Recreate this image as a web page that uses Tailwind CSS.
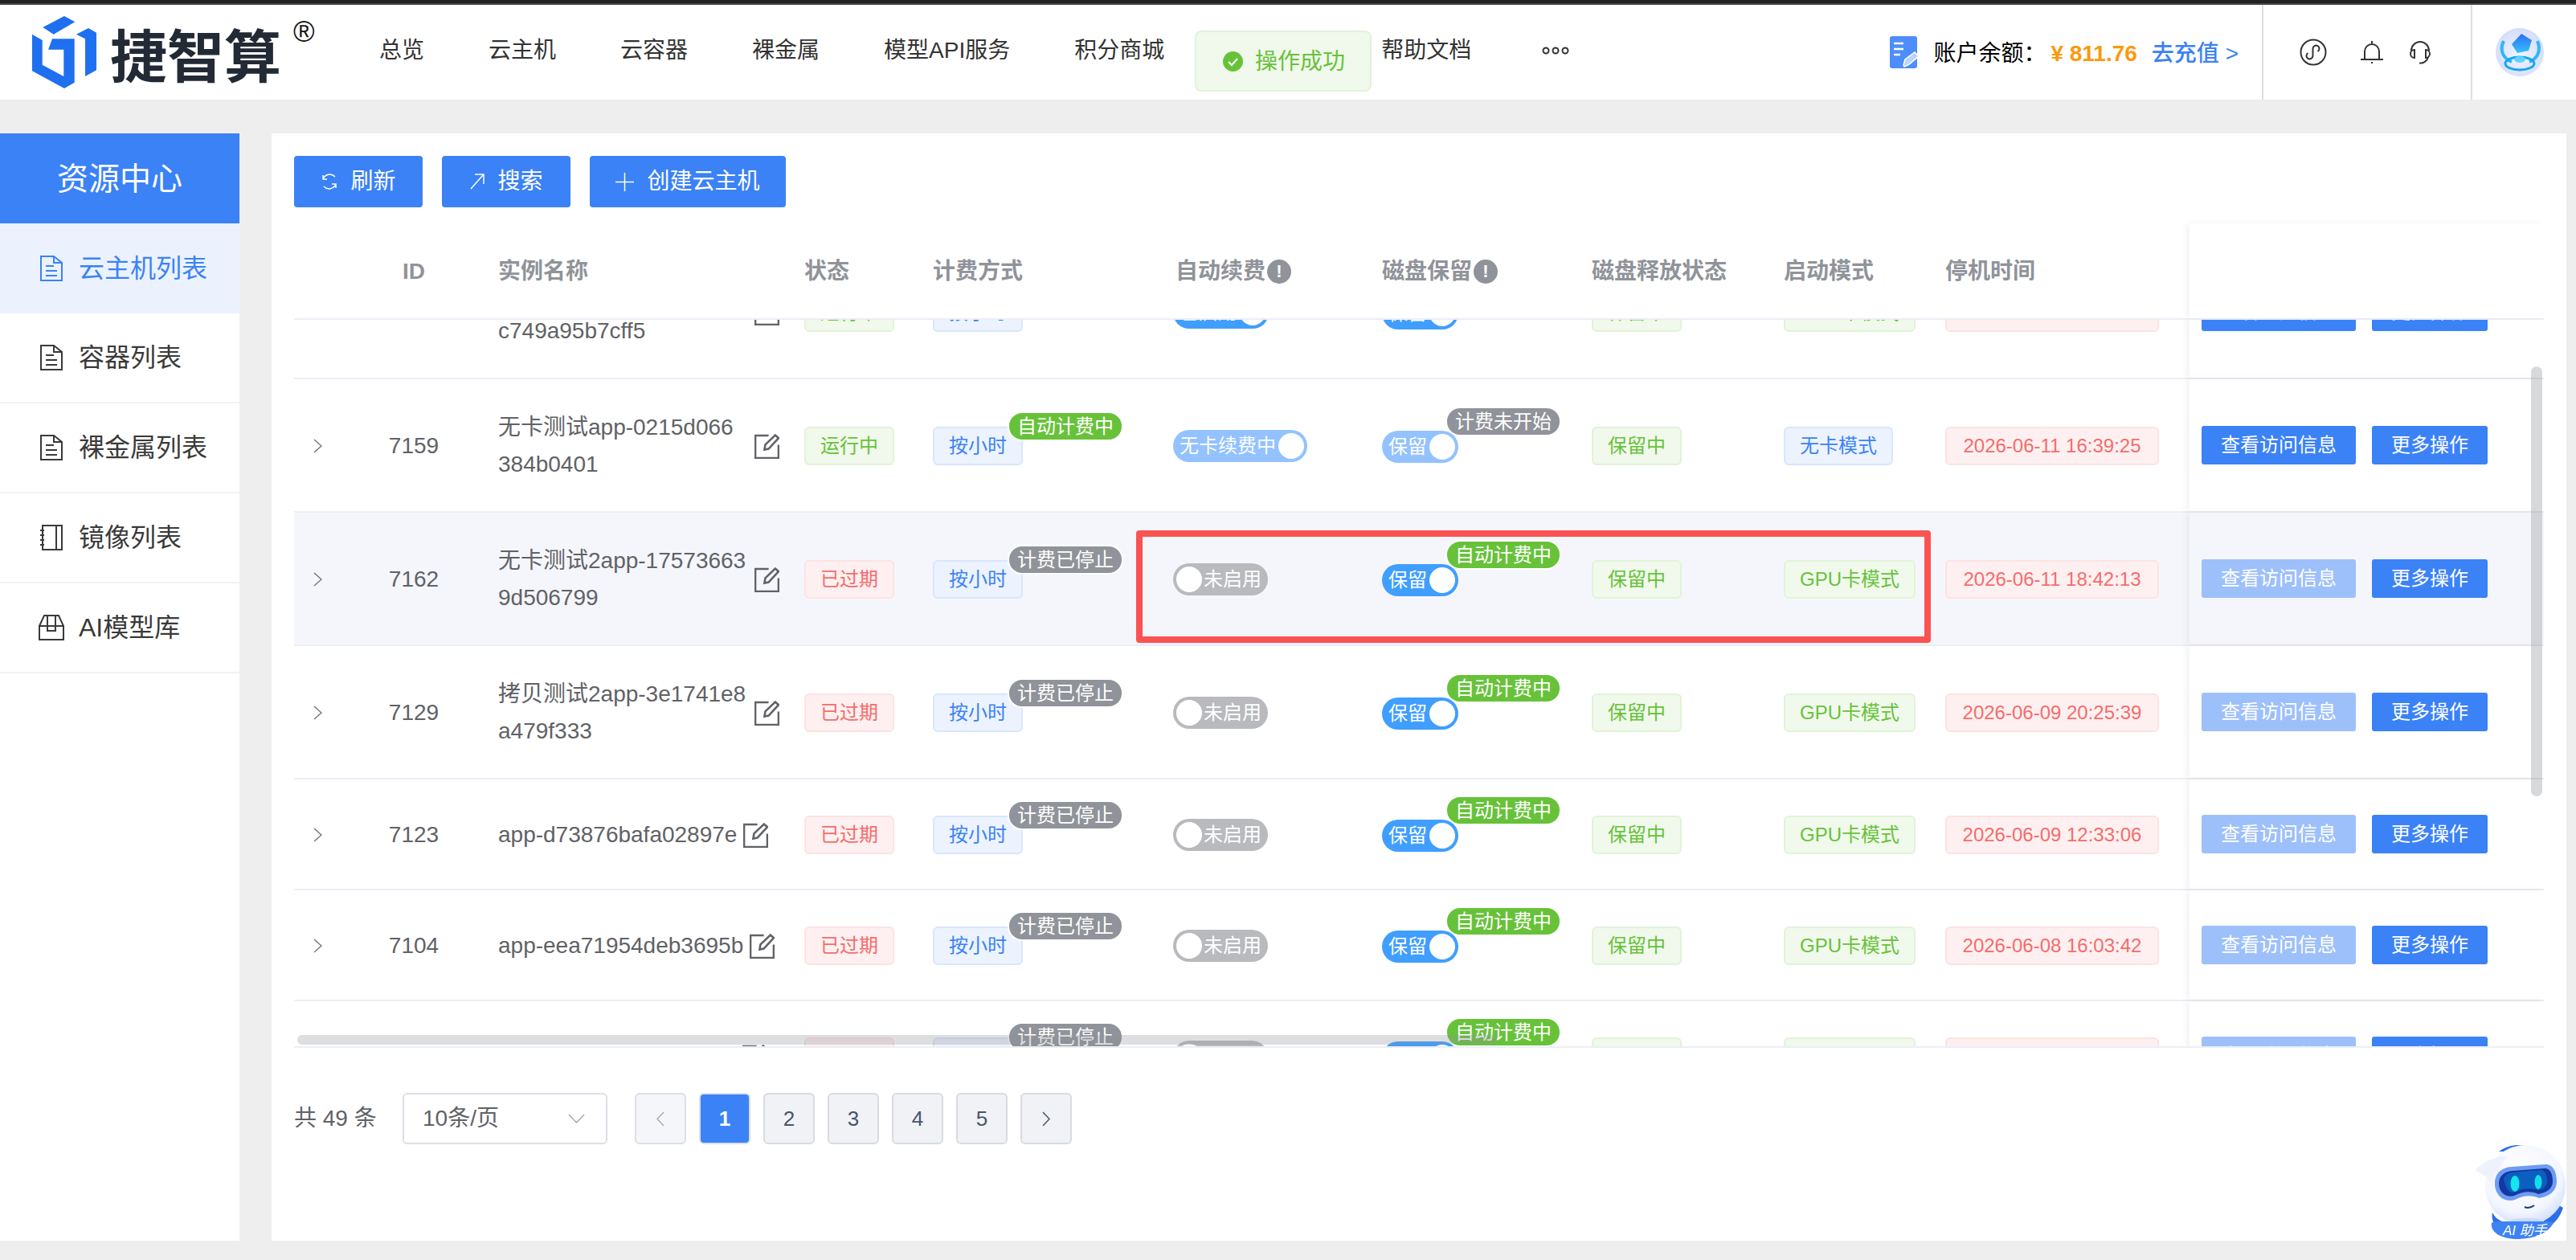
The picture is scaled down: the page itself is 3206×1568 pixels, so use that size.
<!DOCTYPE html>
<html lang="zh-CN">
<head>
<meta charset="utf-8">
<title>捷智算</title>
<script src="https://cdn.jsdelivr.net/npm/@tailwindcss/browser@4"></script>
</head>
<body class="h-screen w-full overflow-hidden bg-[#eeeeee] font-['Liberation_Sans','Noto_Sans_CJK_SC',sans-serif] text-[28px] leading-normal">

<div class="h-1.5 bg-[#222222] border-b-2 border-[#444444]"></div>

<!-- top nav -->
<header class="relative flex h-[118px] items-center bg-white pl-10">
    <div class="flex w-[432px] shrink-0 items-center">
        <svg class="h-[90px] w-20 shrink-0" viewBox="0 0 80 90" fill="#1f70f0" aria-hidden="true">
            <path d="M40 0 53.3 7.3 26.7 22.7 13.3 14Z"/>
            <path d="M55 22.7 70 15 80 20.7V67.3L66 75V28.3Z"/>
            <path d="M0 22.7 12.7 30V60.7L39.3 75V41.7H20L25 28.3H52.7V82.7L40 90 0 68.3Z"/>
        </svg>
        <span class="ml-[17px] whitespace-nowrap font-['Noto_Sans_CJK_SC',sans-serif] text-[71px] leading-none font-bold text-[#222a35]">捷智算</span>
        <span class="ml-[15px] -mt-[50px] text-[36px] leading-none text-[#111111]">®</span>
    </div>
    <nav class="flex items-center gap-20 pb-1 whitespace-nowrap text-[#333333]">
        <a>总览</a>
        <a>云主机</a>
        <a>云容器</a>
        <a>裸金属</a>
        <a>模型API服务</a>
        <a>积分商城</a>
        <div class="w-[110px]"></div>
        <a>帮助文档</a>
        <svg class="ml-2 h-2.5 w-[34px]" viewBox="0 0 34 10" fill="none" stroke="#333333" stroke-width="2" aria-hidden="true">
            <circle cx="5" cy="5" r="3.5"/><circle cx="17" cy="5" r="3.5"/><circle cx="29" cy="5" r="3.5"/>
        </svg>
    </nav>

    <!-- toast -->
    <div class="absolute left-[1487px] top-8 flex h-[76px] w-[220px] items-center gap-[15px] rounded-lg border-2 border-[#e1f3d8] bg-[#f0f9eb] pl-[33px] text-[#67c23a]">
        <svg class="h-[25px] w-[25px] shrink-0" viewBox="0 0 25 25" aria-hidden="true">
            <circle cx="12.5" cy="12.5" r="12.5" fill="#67c23a"/>
            <path d="M7 13l4 4 7-8" fill="none" stroke="#fff" stroke-width="2"/>
        </svg>
        <span class="mt-0.5 whitespace-nowrap">操作成功</span>
    </div>

    <div class="ml-auto flex h-full items-center">
        <svg class="h-10 w-[37px] shrink-0" viewBox="0 0 37 40" aria-hidden="true">
            <rect x="0" y="0" width="34" height="40" rx="3" fill="#4e8efc"/>
            <path d="M5 9h12M5 16h12M5 23h8" stroke="#fff" stroke-width="2.5"/>
            <path d="M17 36 19 29 31 20 36 25 24 35 18 38Z" fill="#bcd3fe" stroke="#fff" stroke-width="1.5"/>
        </svg>
        <span class="ml-[17px] mt-1 whitespace-nowrap text-black">账户余额：</span>
        <span class="ml-[6px] mt-1 whitespace-nowrap font-bold text-[#fa9a0e]">¥ 811.76</span>
        <span class="ml-[18px] mt-1 whitespace-nowrap font-medium text-[#3b82f6]">去充值 &gt;</span>
        <div class="ml-[29px] flex h-full w-[262px] items-center border-x-2 border-[#dddddd] pl-[45px]">
            <svg class="h-[34px] w-[34px]" viewBox="0 0 34 34" fill="none" stroke="#333333" stroke-width="2" aria-hidden="true">
                <circle cx="17" cy="17" r="15.5"/>
                <path d="M10.5 18a4 4 0 1 0 6 3.5v-9a4 4 0 1 1 6 3.5"/>
            </svg>
            <svg class="ml-[41px] h-[30px] w-[30px]" viewBox="0 0 30 30" fill="none" stroke="#333333" stroke-width="2" aria-hidden="true">
                <path d="M1 24H29M6 24V14a9 9 0 0 1 18 0V24"/>
                <path d="M15 1v3M14 28h2"/>
            </svg>
            <svg class="ml-[31px] h-[30px] w-7" viewBox="0 0 28 30" fill="none" stroke="#333333" stroke-width="2" aria-hidden="true">
                <path d="M3 13a11 11 0 0 1 22 0"/>
                <path d="M7 12A5 5 0 0 0 7 22ZM21 12A5 5 0 0 1 21 22Z"/>
                <path d="M24 21a10 10 0 0 1-11 7.5"/>
            </svg>
        </div>
        <svg class="ml-[29px] mr-10 h-[60px] w-[60px] shrink-0" viewBox="0 0 60 60" aria-hidden="true">
            <defs>
                <radialGradient id="avatarBg" cx="50%" cy="55%" r="55%">
                    <stop offset="0" stop-color="#f3f6ff"/><stop offset="1" stop-color="#d3dcfa"/>
                </radialGradient>
                <linearGradient id="cubeFill" x1="0" y1="0" x2="0" y2="1">
                    <stop offset="0" stop-color="#2f6df0"/><stop offset="1" stop-color="#35c2ff"/>
                </linearGradient>
            </defs>
            <circle cx="30" cy="30" r="30" fill="url(#avatarBg)"/>
            <path d="M32 7 45 15 41 28 27 31 20 20Z" fill="url(#cubeFill)"/>
            <path d="M10 16C4 28 10 38 20 42M52 16C57 28 52 38 42 42" fill="none" stroke="#2fb5f8" stroke-width="4"/>
            <ellipse cx="30" cy="44" rx="18" ry="8" fill="none" stroke="#19a4f2" stroke-width="3"/>
            <ellipse cx="30" cy="39" rx="7" ry="4" fill="#5cd5ff"/>
        </svg>
    </div>
</header>

<main class="flex h-[1444px] gap-10 pb-6 pr-3 pt-[42px]">
    <!-- sidebar -->
    <aside class="w-[298px] shrink-0 bg-white">
        <div class="flex h-28 items-center justify-center bg-[#3b82f6] pt-0.5 text-[39px] text-white">资源中心</div>
        <div class="flex h-28 items-center gap-5 bg-[#ebf2fe] pl-[50px] text-[32px] text-[#3b82f6]">
            <svg class="h-8 w-7 shrink-0" viewBox="0 0 28 32" fill="none" stroke="currentColor" stroke-width="2" aria-hidden="true"><path d="M1 1H17L27 9V31H1Z"/><path d="M17 1V9H27M7 13H17M7 19H21M7 25H21"/></svg>
            云主机列表
        </div>
        <div class="flex h-28 items-center gap-5 border-b-2 border-[#f2f2f2] pl-[50px] text-[32px] text-[#3a3a3a]">
            <svg class="h-8 w-7 shrink-0" viewBox="0 0 28 32" fill="none" stroke="currentColor" stroke-width="2" aria-hidden="true"><path d="M1 1H17L27 9V31H1Z"/><path d="M17 1V9H27M7 13H17M7 19H21M7 25H21"/></svg>
            容器列表
        </div>
        <div class="flex h-28 items-center gap-5 border-b-2 border-[#f2f2f2] pl-[50px] text-[32px] text-[#3a3a3a]">
            <svg class="h-8 w-7 shrink-0" viewBox="0 0 28 32" fill="none" stroke="currentColor" stroke-width="2" aria-hidden="true"><path d="M1 1H17L27 9V31H1Z"/><path d="M17 1V9H27M7 13H17M7 19H21M7 25H21"/></svg>
            裸金属列表
        </div>
        <div class="flex h-28 items-center gap-5 border-b-2 border-[#f2f2f2] pl-[50px] text-[32px] text-[#3a3a3a]">
            <svg class="h-8 w-7 shrink-0" viewBox="0 0 28 32" fill="none" stroke="currentColor" stroke-width="2" aria-hidden="true"><path d="M3 1H27V31H3ZM20 1V31M0 7H5M0 13H5M0 19H5M0 25H5"/></svg>
            镜像列表
        </div>
        <div class="flex h-28 items-center gap-[18px] border-b-2 border-[#f2f2f2] pl-[48px] text-[32px] text-[#3a3a3a]">
            <svg class="h-8 w-8 shrink-0" viewBox="0 0 32 32" fill="none" stroke="currentColor" stroke-width="2" aria-hidden="true"><path d="M1 14H31V31H1ZM1 14 7 1H25L31 14M11 1V20H21V1"/></svg>
            AI模型库
        </div>
    </aside>

    <!-- content panel -->
    <section class="relative min-w-0 flex-1 bg-white px-7 pt-7">
        <div class="flex gap-6 text-white">
            <button class="flex h-16 w-40 items-center justify-center gap-[15px] rounded bg-[#3b82f6]">
                <svg class="h-[22px] w-[22px]" viewBox="0 0 22 22" fill="none" stroke="#fff" stroke-width="1.5" aria-hidden="true"><path d="M18 5A9 9 0 0 0 3 8M4 17A9 9 0 0 0 19 14M3 3V8H8M19 19V14H14"/></svg>
                刷新
            </button>
            <button class="flex h-16 w-40 items-center justify-center gap-[15px] rounded bg-[#3b82f6]">
                <svg class="h-[22px] w-[20px]" viewBox="0 0 20 22" fill="none" stroke="#fff" stroke-width="1.5" aria-hidden="true"><path d="M2 20 17 3M7 2H18V14"/></svg>
                搜索
            </button>
            <button class="flex h-16 w-[244px] items-center justify-center gap-4 rounded bg-[#3b82f6]">
                <svg class="h-[23px] w-[23px]" viewBox="0 0 23 23" fill="none" stroke="#fff" stroke-width="1.5" aria-hidden="true"><path d="M11.5 0V23M0 11.5H23"/></svg>
                创建云主机
            </button>
        </div>

        <div class="relative mt-5">
            <!-- table head -->
            <div class="grid h-[120px] grid-cols-[90px_118px_427px_160px_299px_260px_261px_239px_201px_304px_441px] items-center border-b-2 border-[#ebeef5] pt-0.5 font-semibold text-[#909399]">
                <div></div>
                <div class="text-center">ID</div>
                <div class="pl-[46px]">实例名称</div>
                <div>状态</div>
                <div>计费方式</div>
                <div class="flex items-center pl-[3px]">自动续费<span class="ml-[2px] flex h-[30px] w-[30px] items-center justify-center rounded-full bg-[#909399] text-[22px] leading-none font-bold text-white">!</span></div>
                <div class="flex items-center">磁盘保留<span class="ml-[2px] flex h-[30px] w-[30px] items-center justify-center rounded-full bg-[#909399] text-[22px] leading-none font-bold text-white">!</span></div>
                <div>磁盘释放状态</div>
                <div>启动模式</div>
                <div>停机时间</div>
                <div class="-mt-0.5 self-stretch bg-white shadow-[-4px_0_8px_rgba(0,0,0,0.05)]"></div>
            </div>
            <!-- table body, scrolled -->
            <div class="h-[906px] overflow-hidden border-b-2 border-[#ebeef5]">
                <div id="rows" class="-mt-[92px]"></div>
            </div>
            <!-- scrollbars -->
            <div class="absolute left-[2784px] top-[178px] z-30 h-[535px] w-3.5 rounded-full bg-[#909399]/35"></div>
            <div class="absolute left-1 top-[1010px] z-30 h-3 w-[1492px] rounded-full bg-[#909399]/30"></div>
        </div>

        <!-- pagination -->
        <div class="mt-14 flex items-center text-[#606266]">
            <span class="w-[135px] whitespace-nowrap">共 49 条</span>
            <div class="flex h-16 w-[255px] items-center justify-between rounded-md border-2 border-[#dcdfe6] pl-[23px] pr-[26px]">
                10条/页
                <svg class="h-3 w-[21px]" viewBox="0 0 21 12" fill="none" stroke="#a8abb2" stroke-width="1.5" aria-hidden="true"><path d="M1 1 10.5 11 20 1"/></svg>
            </div>
            <div class="ml-[34px] flex gap-4 text-[26px] text-[#4a5568]">
                <div class="flex h-16 w-16 items-center justify-center rounded-md border-2 border-[#dcdfe6] bg-[#f5f6fa]">
                    <svg class="h-[19px] w-2.5" viewBox="0 0 10 19" fill="none" stroke="#a8abb2" stroke-width="1.5" aria-hidden="true"><path d="M9 1 1 9.5 9 18"/></svg>
                </div>
                <div class="flex h-16 w-16 items-center justify-center rounded-md border-2 border-[#dcdfe6] bg-[#3b82f6] font-bold text-white">1</div>
                <div class="flex h-16 w-16 items-center justify-center rounded-md border-2 border-[#d8dbe2] bg-[#f0f2f6]">2</div>
                <div class="flex h-16 w-16 items-center justify-center rounded-md border-2 border-[#d8dbe2] bg-[#f0f2f6]">3</div>
                <div class="flex h-16 w-16 items-center justify-center rounded-md border-2 border-[#d8dbe2] bg-[#f0f2f6]">4</div>
                <div class="flex h-16 w-16 items-center justify-center rounded-md border-2 border-[#d8dbe2] bg-[#f0f2f6]">5</div>
                <div class="flex h-16 w-16 items-center justify-center rounded-md border-2 border-[#d8dbe2] bg-[#f0f2f6]">
                    <svg class="h-[19px] w-2.5" viewBox="0 0 10 19" fill="none" stroke="#4a5568" stroke-width="1.5" aria-hidden="true"><path d="M1 1 9 9.5 1 18"/></svg>
                </div>
            </div>
        </div>

        <!-- AI assistant -->
        <svg class="absolute bottom-0.5 right-px h-[117px] w-[113px]" viewBox="0 0 113 117" aria-hidden="true">
            <defs>
                <radialGradient id="botHead" cx="45%" cy="35%" r="70%">
                    <stop offset="0" stop-color="#ffffff"/><stop offset="0.7" stop-color="#f3f6ff"/><stop offset="1" stop-color="#c9d8fb"/>
                </radialGradient>
            </defs>
            <path d="M30 8C45 -3 65 -2 84 8Z" fill="#2b6fe8"/>
            <path d="M22 84C30 100 45 96 66 96 85 96 97 90 103 74L110 78C104 96 92 102 88 104H30C24 100 20 92 22 84Z" fill="#2b6fe8"/>
            <circle cx="63" cy="50" r="50" fill="url(#botHead)"/>
            <path d="M0 32C10 20 26 14 40 14L20 46C16 40 8 34 0 32Z" fill="#eef2fd"/>
            <path d="M25 48C25 34 34 28 46 27L88 24C98 24 102 34 102 45 102 58 92 64 80 66 72 62 60 62 50 68 36 72 25 62 25 48Z" fill="#6e9cf5"/>
            <path d="M30 48C30 38 37 33 47 32L87 29C94 29 97 36 97 45 97 54 90 59 79 61 71 57 60 57 49 63 38 66 30 58 30 48Z" fill="#14389e"/>
            <path d="M36 43C36 37 42 35 47 34L82 31C88 31 90 38 90 45 90 51 86 55 78 56 70 53 58 54 48 59 42 60 38 52 36 43Z" fill="#0a5fc0"/>
            <ellipse cx="50" cy="48" rx="5.5" ry="10" fill="#13e6ee"/>
            <ellipse cx="79" cy="46" rx="4.5" ry="9" fill="#13dfe8"/>
            <path d="M62 77C66 79 70 78 74 75" fill="none" stroke="#123a7a" stroke-width="2"/>
            <path d="M44 94C48 90 80 90 86 94V100H44Z" fill="#c9d8fb"/>
            <path d="M21 97Q22 95 30 95H92Q97 95 98 97C92 108 78 116 55 117 32 117 19 108 21 97Z" fill="#3f82f3"/>
            <text x="35" y="112" fill="#ffffff" font-family="Liberation Sans, Noto Sans CJK SC, sans-serif" font-size="17" font-style="italic">AI 助手</text>
        </svg>
    </section>
</main>

<script>
    const TAG = {
        green: 'inline-flex h-12 items-center justify-center whitespace-nowrap rounded-md border-2 border-[#e1f3d8] bg-[#f0f9eb] px-[18px] text-2xl text-[#67c23a]',
        red: 'inline-flex h-12 items-center justify-center whitespace-nowrap rounded-md border-2 border-[#fde2e2] bg-[#fef0f0] px-[18px] text-2xl text-[#f56c6c]',
        blue: 'inline-flex h-12 items-center justify-center whitespace-nowrap rounded-md border-2 border-[#d8e6fd] bg-[#ecf3fe] px-[18px] text-2xl text-[#3b82f6]',
    };
    const BADGE = {
        green: 'absolute z-10 flex h-[37px] w-[144px] items-center justify-center whitespace-nowrap rounded-[18px] border-2 border-white bg-[#67c23a] text-2xl text-white',
        grey: 'absolute z-10 flex h-[37px] w-[144px] items-center justify-center whitespace-nowrap rounded-[18px] border-2 border-white bg-[#909399] text-2xl text-white',
    };
    const SWITCH_BG = { on: 'bg-[#409eff]', light: 'bg-[#93c2ff]', off: 'bg-[#b9babe]' };
    const KNOB = '<span class="h-8 w-8 shrink-0 rounded-full bg-white"></span>';
    const CHEVRON = '<svg class="h-[18px] w-[11px]" viewBox="0 0 11 18" fill="none" stroke="#777777" stroke-width="1.5" aria-hidden="true"><path d="M1 1 10 9 1 17"/></svg>';
    const EDIT = '<svg class="ml-2 h-[31px] w-[31px] shrink-0" viewBox="0 0 30 30" fill="none" stroke="#606266" stroke-width="2.5" aria-hidden="true"><path d="M17 2H1V29H29V13"/><path d="M12 19 13 13 25 1.5 29 5 17 18Z"/></svg>';

    function toggle(text, tone) {
        // knob sits on the right when the switch is on
        const base = 'inline-flex h-10 items-center whitespace-nowrap rounded-full text-2xl text-white ' + SWITCH_BG[tone];
        if (tone === 'off') {
            return `<span class="${base} gap-0.5 pl-1 pr-2">${KNOB}${text}</span>`;
        }
        return `<span class="${base} gap-[3px] pl-2 pr-1">${text}${KNOB}</span>`;
    }

    const data = [
        { id: 7160, name: ['无卡测试app-b2e4c07d', 'c749a95b7cff5'], status: ['运行中', 'green'], bill: null, auto: ['已启用', 'on'], disk: 'on', diskBadge: null, boot: ['GPU卡模式', 'green'], time: '2026-06-11 16:02:11', h: 'h-[166px]', viewOff: false },
        { id: 7159, name: ['无卡测试app-0215d066', '384b0401'], status: ['运行中', 'green'], bill: ['自动计费中', 'green'], auto: ['无卡续费中', 'light'], disk: 'light', diskBadge: ['计费未开始', 'grey'], boot: ['无卡模式', 'blue'], time: '2026-06-11 16:39:25', h: 'h-[166px]', viewOff: false },
        { id: 7162, name: ['无卡测试2app-17573663', '9d506799'], status: ['已过期', 'red'], bill: ['计费已停止', 'grey'], auto: ['未启用', 'off'], disk: 'on', diskBadge: ['自动计费中', 'green'], boot: ['GPU卡模式', 'green'], time: '2026-06-11 18:42:13', h: 'h-[166px]', viewOff: true, active: true },
        { id: 7129, name: ['拷贝测试2app-3e1741e8', 'a479f333'], status: ['已过期', 'red'], bill: ['计费已停止', 'grey'], auto: ['未启用', 'off'], disk: 'on', diskBadge: ['自动计费中', 'green'], boot: ['GPU卡模式', 'green'], time: '2026-06-09 20:25:39', h: 'h-[166px]', viewOff: true },
        { id: 7123, name: ['app-d73876bafa02897e'], status: ['已过期', 'red'], bill: ['计费已停止', 'grey'], auto: ['未启用', 'off'], disk: 'on', diskBadge: ['自动计费中', 'green'], boot: ['GPU卡模式', 'green'], time: '2026-06-09 12:33:06', h: 'h-[138px]', viewOff: true },
        { id: 7104, name: ['app-eea71954deb3695b'], status: ['已过期', 'red'], bill: ['计费已停止', 'grey'], auto: ['未启用', 'off'], disk: 'on', diskBadge: ['自动计费中', 'green'], boot: ['GPU卡模式', 'green'], time: '2026-06-08 16:03:42', h: 'h-[138px]', viewOff: true },
        { id: 7098, name: ['app-a41c07e2d96b8f13'], status: ['已过期', 'red'], bill: ['计费已停止', 'grey'], auto: ['未启用', 'off'], disk: 'on', diskBadge: ['自动计费中', 'green'], boot: ['GPU卡模式', 'green'], time: '2026-06-07 10:18:27', h: 'h-[138px]', viewOff: true },
    ];

    const html = data.map(row => {
        const bg = row.active ? 'bg-[#f5f6fb]' : 'bg-white';
        const nameBox = row.name.length > 1 ? 'w-[311px]' : '';
        const billBadge = row.bill ? `<span class="${BADGE[row.bill[1]]} left-[93px] -top-[19px]">${row.bill[0]}</span>` : '';
        const diskBadge = row.diskBadge ? `<span class="${BADGE[row.diskBadge[1]]} left-[79px] -top-[30px]">${row.diskBadge[0]}</span>` : '';
        const viewBtn = row.viewOff ? 'bg-[#9dc0fb]' : 'bg-[#3b82f6]';
        const box = row.active ? '<div class="absolute left-[1048px] top-[22px] z-20 h-[140px] w-[989px] rounded border-8 border-[#fb5252]"></div>' : '';
        return `
        <div class="relative grid ${row.h} grid-cols-[90px_118px_427px_160px_299px_260px_261px_239px_201px_304px_441px] items-center border-b-2 border-[#ebeef5] pt-0.5 ${bg} text-[#606266]">
            <div class="pl-6">${CHEVRON}</div>
            <div class="text-center">${row.id}</div>
            <div class="flex items-center pl-[46px]">
                <div class="whitespace-nowrap leading-[46px] ${nameBox}">${row.name.join('<br>')}</div>${EDIT}
            </div>
            <div><span class="${TAG[row.status[1]]}">${row.status[0]}</span></div>
            <div><span class="relative inline-block"><span class="${TAG.blue}">按小时</span>${billBadge}</span></div>
            <div class="flex">${toggle(row.auto[0], row.auto[1])}</div>
            <div><span class="relative inline-flex">${toggle('保留', row.disk)}${diskBadge}</span></div>
            <div><span class="${TAG.green}">保留中</span></div>
            <div><span class="${TAG[row.boot[1]]}">${row.boot[0]}</span></div>
            <div><span class="${TAG.red} w-[266px]">${row.time}</span></div>
            <div class="relative z-10 -mt-0.5 flex items-center gap-5 self-stretch pl-[15px] text-2xl text-white ${bg} shadow-[-4px_0_8px_rgba(0,0,0,0.05)]">
                <span class="flex h-12 items-center rounded-[3px] px-6 ${viewBtn}">查看访问信息</span>
                <span class="flex h-12 items-center rounded-[3px] bg-[#3b82f6] px-6">更多操作</span>
            </div>
            ${box}
        </div>`;
    }).join('');

    document.getElementById('rows').innerHTML = html;
</script>
</body>
</html>
